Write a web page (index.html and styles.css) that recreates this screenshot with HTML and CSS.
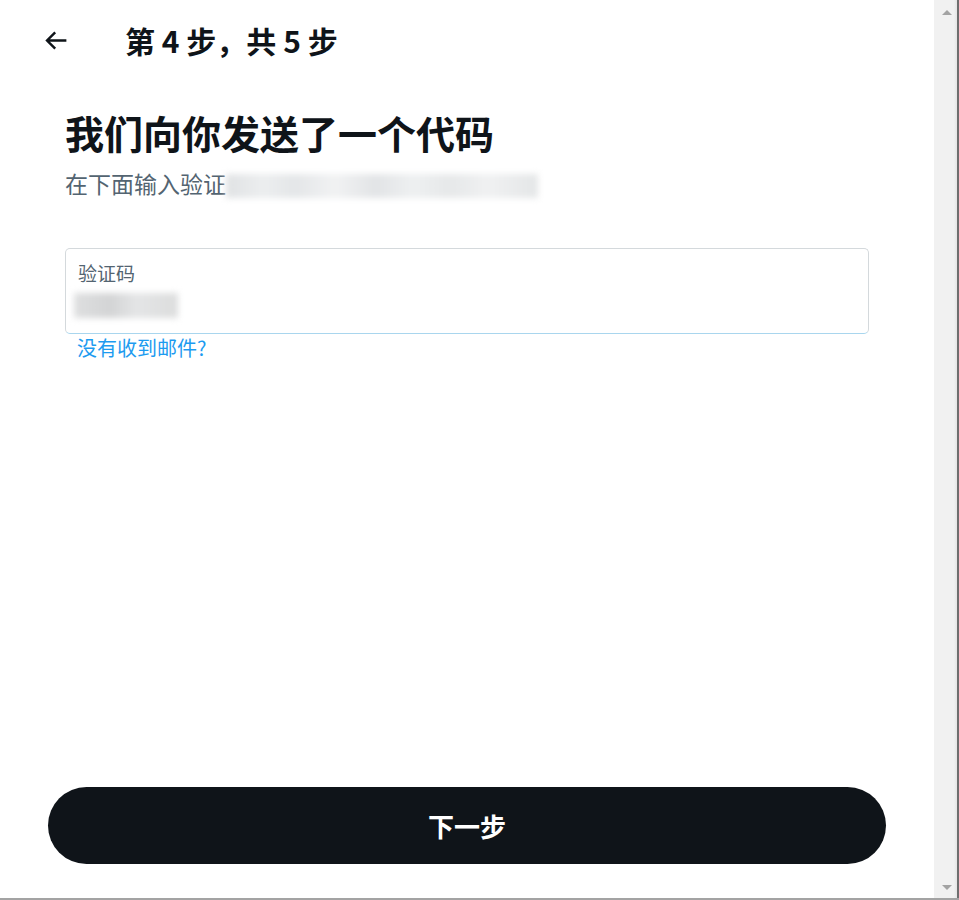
FILE: index.html
```html
<!DOCTYPE html>
<html lang="zh-CN">

<head>
    <meta charset="UTF-8">
    <meta name="viewport" content="width=device-width, initial-scale=1.0">
    <title>验证码</title>
    <link rel="stylesheet" href="styles.css">
</head>

<body>
    <div class="page">
        <main class="flow">
            <header class="topbar">
                <button class="back" aria-label="返回">
                    <svg viewBox="0 0 24 24" width="29" height="29">
                        <path d="M7.414 13l5.043 5.04-1.414 1.42L3.586 12l7.457-7.46 1.414 1.42L7.414 11H21v2H7.414z" fill="#0f1419"></path>
                    </svg>
                </button>
                <h2 class="step">第 4 步，共 5 步</h2>
            </header>

            <section class="content">
                <h1>我们向你发送了一个代码</h1>
                <p class="hint">在下面输入验证<span class="masked wide"></span></p>

                <label class="field">
                    <span class="field-label">验证码</span>
                    <span class="masked short"></span>
                </label>
                <a class="resend" href="#">没有收到邮件?</a>
            </section>

            <div class="actions">
                <button class="next">下一步</button>
            </div>
        </main>

        <div class="scrollbar">
            <span class="arrow up"></span>
            <span class="arrow down"></span>
        </div>
    </div>
</body>

</html>
```

FILE: styles.css
```css
* {
    margin: 0;
    padding: 0;
    box-sizing: border-box;
}

body {
    background: #fff;
    color: #0f1419;
    font-family: "Noto Sans CJK SC", "Noto Sans", sans-serif;
    overflow: hidden;
}

.page {
    display: flex;
    height: 900px;
    border-bottom: 2px solid #a3a3a3;
}

.flow {
    flex: 1;
    display: flex;
    flex-direction: column;
    padding: 0 48px;
}

/* top bar */
.topbar {
    display: flex;
    align-items: center;
    height: 80px;
}

.back {
    display: flex;
    align-items: center;
    justify-content: center;
    width: 29px;
    height: 29px;
    border: none;
    background: none;
    margin-left: -7px;
}

.step {
    margin-left: 55px;
    font-size: 30px;
    font-weight: 700;
}

/* body */
.content {
    padding: 0 17px;
    margin-top: 28px;
}

.content h1 {
    font-size: 39px;
    font-weight: 700;
    line-height: 48px;
}

.hint {
    display: flex;
    align-items: center;
    font-size: 23px;
    color: #536471;
    line-height: 30px;
    margin-top: 12px;
}

.masked {
    display: inline-block;
    filter: blur(3px);
}

.masked.wide {
    width: 312px;
    height: 24px;
    margin-top: 6px;
    background: linear-gradient(90deg, #e0e2e4 0, #eceeef 12%, #e4e6e8 22%, #f1f2f3 35%, #e2e4e6 48%, #eef0f1 60%, #e6e8e9 72%, #f0f1f2 84%, #e4e6e7 100%);
}

.field {
    display: flex;
    flex-direction: column;
    height: 86px;
    margin-top: 50px;
    padding: 10px 12px;
    border: 1px solid #d4d9dc;
    border-bottom-color: #a9d6ee;
    border-radius: 5px;
}

.field-label {
    font-size: 19px;
    color: #536471;
    line-height: 28px;
}

.masked.short {
    width: 104px;
    height: 25px;
    margin-top: 6px;
    margin-left: -4px;
    background: linear-gradient(90deg, #dedfe0 0, #d3d4d5 35%, #e4e5e6 60%, #dcdddd 100%);
}

.resend {
    display: inline-block;
    margin-left: 12px;
    font-size: 20px;
    color: #1d9bf0;
    text-decoration: none;
    line-height: 28px;
}

/* footer button */
.actions {
    margin-top: auto;
    padding-bottom: 34px;
}

.next {
    width: 100%;
    height: 77px;
    border: none;
    border-radius: 40px;
    background: #0f1419;
    color: #fff;
    font-family: inherit;
    font-size: 26px;
    font-weight: 700;
}

/* scrollbar column */
.scrollbar {
    position: relative;
    width: 25px;
    background: linear-gradient(90deg, #f1f1f1 0, #f1f1f1 80%, #e4e4e4 92%, #6e6e6e 92%, #6e6e6e 100%);
}

.arrow {
    position: absolute;
    left: 8px;
    width: 0;
    height: 0;
    border-left: 5px solid transparent;
    border-right: 5px solid transparent;
}

.arrow.up {
    top: 10px;
    border-bottom: 5px solid #a3a3a3;
}

.arrow.down {
    bottom: 8px;
    border-top: 5px solid #a3a3a3;
}
```
